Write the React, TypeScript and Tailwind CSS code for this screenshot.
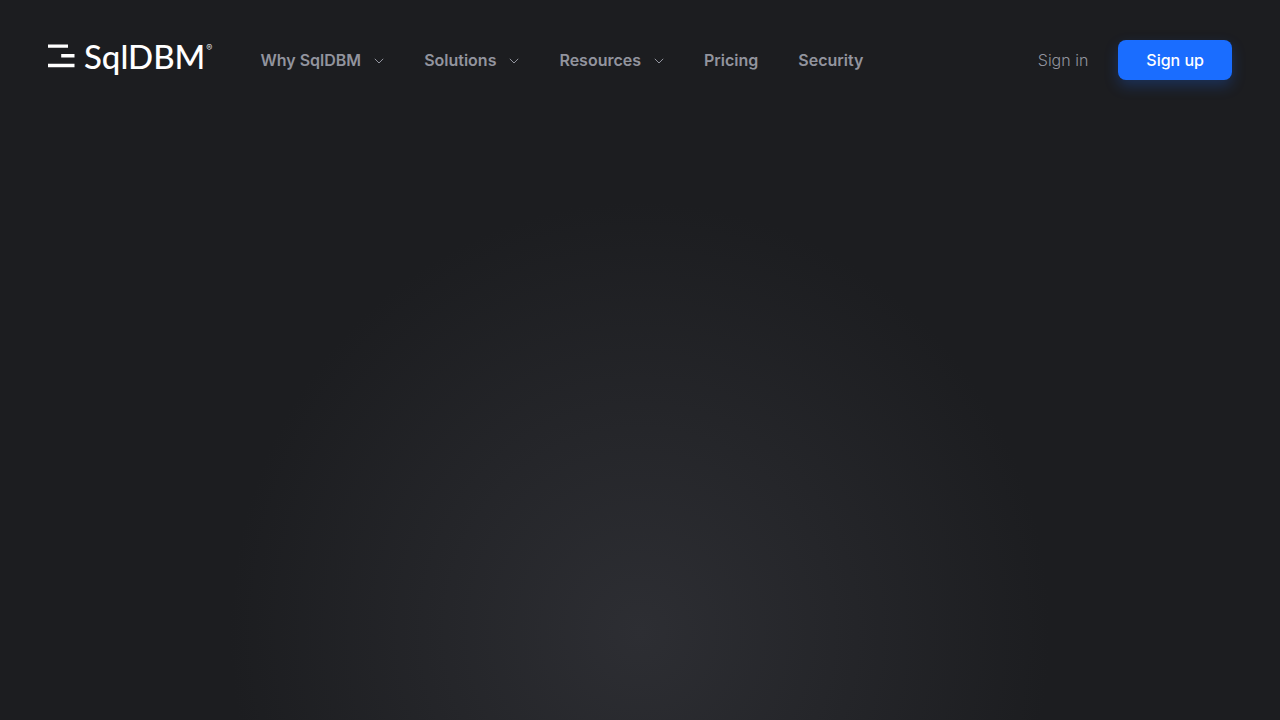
import React from 'react'

const navItems = [
    { label: 'Why SqlDBM', hasMenu: true },
    { label: 'Solutions', hasMenu: true },
    { label: 'Resources', hasMenu: true },
    { label: 'Pricing', hasMenu: false },
    { label: 'Security', hasMenu: false },
]

const Logo = () => (
    <a href="#" className="flex items-center pb-2 text-white">
        <svg viewBox="0 0 27 24" className="w-[27px] h-6 fill-white" aria-hidden="true">
            <path d="M0 0.5h20v3.2H0zM13.2 10h13.3v3.4H13.2zM0 19.8h26.5v3.4H0z"/>
        </svg>
        <span className="ml-[9px] font-['Lato',sans-serif] text-[33px] leading-8 font-medium">SqlDBM</span>
        <span className="self-start pt-1 ml-px font-['Inter',sans-serif] text-[9px] leading-2 font-light">®</span>
    </a>
)

const Chevron = () => (
    <svg viewBox="0 0 10 6" className="w-2.5 h-1.5 mt-0.5 fill-none stroke-[#92949e]" aria-hidden="true">
        <path d="M0.8 0.8L5 5l4.2-4.2"/>
    </svg>
)

const App = () => {
    return (
        <div className="min-h-screen bg-[#1c1d20] bg-[radial-gradient(410px_430px_at_50%_632px,#2d2e33,#1c1d20)] font-['Inter',sans-serif]">
            <header className="flex items-center justify-between px-12 py-10">
                <div className="flex items-center gap-12">
                    <Logo/>
                    <nav>
                        <ul className="flex items-center gap-10">
                            {navItems.map((item) => (
                                <li key={item.label}>
                                    {item.hasMenu ? (
                                        <button type="button"
                                                className="flex items-center gap-[13px] text-base font-semibold text-[#92949e] cursor-pointer">
                                            {item.label}
                                            <Chevron/>
                                        </button>
                                    ) : (
                                        <a href="#" className="text-base font-semibold text-[#92949e]">{item.label}</a>
                                    )}
                                </li>
                            ))}
                        </ul>
                    </nav>
                </div>
                <div className="flex items-center gap-[30px]">
                    <a href="#" className="text-base font-light text-[#92949e]">Sign in</a>
                    <a href="#"
                       className="flex items-center h-10 px-7 rounded-lg bg-[#1a6dff] text-base font-medium text-white shadow-[0_6px_14px_rgba(26,109,255,0.25)]">
                        Sign up
                    </a>
                </div>
            </header>
        </div>
    )
}

export default App
